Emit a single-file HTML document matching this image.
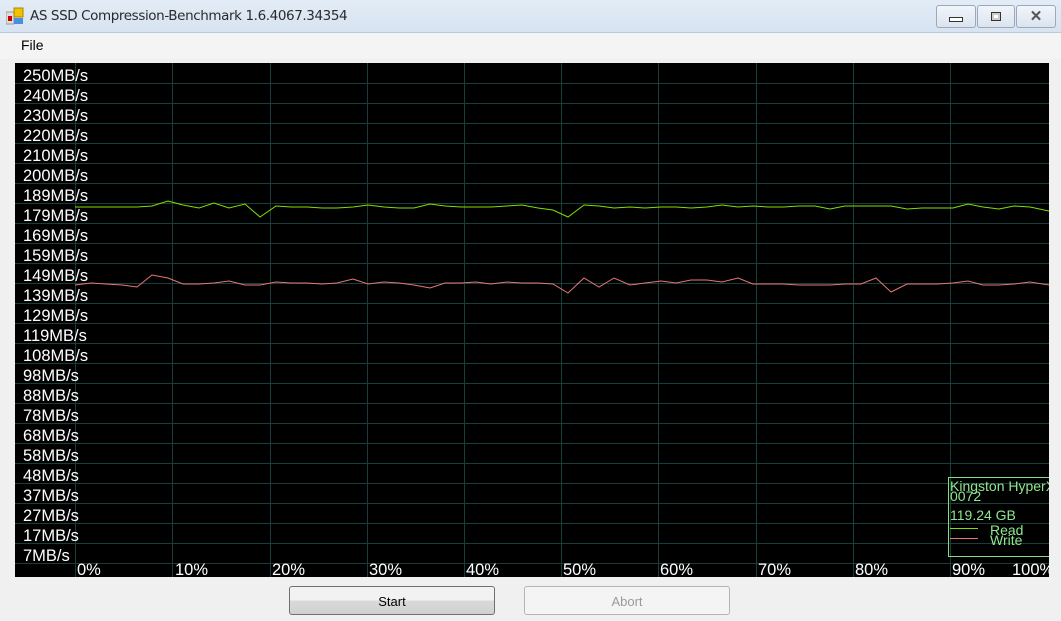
<!DOCTYPE html>
<html><head><meta charset="utf-8"><style>
body{margin:0;width:1061px;height:621px;overflow:hidden;background:#f0f0f0;font-family:"Liberation Sans",sans-serif;position:relative}
.title{position:absolute;left:0;top:0;width:1061px;height:32px;background:linear-gradient(#e3ecf6,#d7e3f1);border-bottom:1px solid #b9c9da}
.title span{position:absolute;left:30px;top:8px;font-size:13.5px;color:#2a2a2a;font-family:"DejaVu Sans",sans-serif;letter-spacing:-0.4px}
.menu{position:absolute;left:0;top:33px;width:1061px;height:26px;background:#f4f4f4}
.menu span{position:absolute;left:21px;top:4px;font-size:14px}
.wb{position:absolute;top:5px;height:21px;border:1px solid #9aa9bc;border-radius:3px;background:linear-gradient(#f1f5fa,#dbe4ee)}
.btn{position:absolute;top:586px;width:206px;height:29px;border:1px solid #707070;border-radius:3px;font-size:13px;text-align:center;line-height:29px;box-sizing:border-box}
</style></head><body>
<div class="title">
<svg style="position:absolute;left:6px;top:7px" width="18" height="18"><rect x="0" y="5" width="8" height="12" fill="#ddd" stroke="#999"/><rect x="2" y="9" width="4" height="5" fill="#c00"/><rect x="8" y="1" width="9" height="9" fill="#f2c200" stroke="#a80"/><rect x="8" y="11" width="9" height="6" fill="#4a8ee0"/></svg>
<span>AS SSD Compression-Benchmark 1.6.4067.34354</span>
<div class="wb" style="left:936px;width:38px"><div style="position:absolute;left:12px;top:11px;width:12px;height:3px;background:#fff;border:1px solid #333"></div></div>
<div class="wb" style="left:977px;width:36px"><div style="position:absolute;left:13px;top:6px;width:8px;height:7px;border:1px solid #333;background:#ccc"><div style="margin:2px;width:4px;height:3px;border:0;background:#fff"></div></div></div>
<div class="wb" style="left:1016px;width:38px;text-align:center;font-size:15px;line-height:21px;color:#555;font-weight:bold">✕</div>
</div>
<div class="menu"><span>File</span></div>
<svg style="position:absolute;left:15px;top:63px" width="1034" height="514" font-family="Liberation Sans" font-size="16.5">
<rect width="1034" height="514" fill="#000"/>
<g stroke="#173d3d" stroke-width="1">
<line x1="0" y1="20.5" x2="1034" y2="20.5"/><line x1="0" y1="40.5" x2="1034" y2="40.5"/><line x1="0" y1="60.5" x2="1034" y2="60.5"/><line x1="0" y1="80.5" x2="1034" y2="80.5"/><line x1="0" y1="100.5" x2="1034" y2="100.5"/><line x1="0" y1="120.5" x2="1034" y2="120.5"/><line x1="0" y1="140.5" x2="1034" y2="140.5"/><line x1="0" y1="160.5" x2="1034" y2="160.5"/><line x1="0" y1="180.5" x2="1034" y2="180.5"/><line x1="0" y1="200.5" x2="1034" y2="200.5"/><line x1="0" y1="220.5" x2="1034" y2="220.5"/><line x1="0" y1="240.5" x2="1034" y2="240.5"/><line x1="0" y1="260.5" x2="1034" y2="260.5"/><line x1="0" y1="280.5" x2="1034" y2="280.5"/><line x1="0" y1="300.5" x2="1034" y2="300.5"/><line x1="0" y1="320.5" x2="1034" y2="320.5"/><line x1="0" y1="340.5" x2="1034" y2="340.5"/><line x1="0" y1="360.5" x2="1034" y2="360.5"/><line x1="0" y1="380.5" x2="1034" y2="380.5"/><line x1="0" y1="400.5" x2="1034" y2="400.5"/><line x1="0" y1="420.5" x2="1034" y2="420.5"/><line x1="0" y1="440.5" x2="1034" y2="440.5"/><line x1="0" y1="460.5" x2="1034" y2="460.5"/><line x1="0" y1="480.5" x2="1034" y2="480.5"/><line x1="0" y1="500.5" x2="1034" y2="500.5"/>
<line x1="60.5" y1="0" x2="60.5" y2="514"/><line x1="157.5" y1="0" x2="157.5" y2="514"/><line x1="255.5" y1="0" x2="255.5" y2="514"/><line x1="352.5" y1="0" x2="352.5" y2="514"/><line x1="449.5" y1="0" x2="449.5" y2="514"/><line x1="546.5" y1="0" x2="546.5" y2="514"/><line x1="643.5" y1="0" x2="643.5" y2="514"/><line x1="741.5" y1="0" x2="741.5" y2="514"/><line x1="838.5" y1="0" x2="838.5" y2="514"/><line x1="935.5" y1="0" x2="935.5" y2="514"/>
</g>
<g fill="#fff">
<text x="8" y="18">250MB/s</text><text x="8" y="38">240MB/s</text><text x="8" y="58">230MB/s</text><text x="8" y="78">220MB/s</text><text x="8" y="98">210MB/s</text><text x="8" y="118">200MB/s</text><text x="8" y="138">189MB/s</text><text x="8" y="158">179MB/s</text><text x="8" y="178">169MB/s</text><text x="8" y="198">159MB/s</text><text x="8" y="218">149MB/s</text><text x="8" y="238">139MB/s</text><text x="8" y="258">129MB/s</text><text x="8" y="278">119MB/s</text><text x="8" y="298">108MB/s</text><text x="8" y="318">98MB/s</text><text x="8" y="338">88MB/s</text><text x="8" y="358">78MB/s</text><text x="8" y="378">68MB/s</text><text x="8" y="398">58MB/s</text><text x="8" y="418">48MB/s</text><text x="8" y="438">37MB/s</text><text x="8" y="458">27MB/s</text><text x="8" y="478">17MB/s</text><text x="8" y="498">7MB/s</text>
<text x="62" y="512">0%</text><text x="160" y="512">10%</text><text x="257" y="512">20%</text><text x="354" y="512">30%</text><text x="451" y="512">40%</text><text x="548" y="512">50%</text><text x="645" y="512">60%</text><text x="743" y="512">70%</text><text x="840" y="512">80%</text><text x="937" y="512">90%</text><text x="997" y="512">100%</text>
</g>
<polyline fill="none" stroke="#7fe000" stroke-width="1" points="60,144 76,144 91,144 107,144 122,144 137,143 153,138 168,142 184,145 199,140 214,145 230,141 245,154 261,143 276,144 292,144 307,145 322,145 338,144 353,142 369,144 384,145 399,145 415,141 430,143 446,144 461,144 476,144 492,143 507,142 523,145 538,147 553,154 569,142 584,143 599,145 615,144 630,145 646,144 661,144 676,145 692,144 707,142 723,144 738,143 753,144 769,144 784,143 800,143 815,146 830,143 846,143 861,143 876,143 892,146 907,145 922,145 938,145 953,141 968,144 984,146 999,143 1015,144 1034,148"/>
<polyline fill="none" stroke="#e77777" stroke-width="1" points="60,222 76,220 91,221 107,222 122,224 137,212 153,215 168,221 184,221 199,220 214,218 230,222 245,222 261,219 276,220 292,220 307,221 322,220 338,216 353,221 369,219 384,220 399,222 415,225 430,220 446,220 461,219 476,221 492,219 507,220 523,220 538,221 553,230 569,215 584,224 599,215 615,222 630,220 646,218 661,220 676,217 692,217 707,219 723,215 738,221 753,221 769,221 784,222 800,222 815,222 830,221 846,221 861,215 876,229 892,221 907,221 922,221 938,220 953,218 968,222 984,222 999,221 1015,219 1034,222"/>
<rect x="933.5" y="414.5" width="105" height="79" fill="none" stroke="#7fe07f"/>
<g fill="#8fe88f" font-size="14"><text x="935" y="428">Kingston HyperX</text><text x="935" y="438">0072</text><text x="935" y="457">119.24 GB</text><text x="975" y="472">Read</text><text x="975" y="482">Write</text></g>
<line x1="935" y1="465.5" x2="963" y2="465.5" stroke="#7fe000"/><line x1="935" y1="475.5" x2="963" y2="475.5" stroke="#e77777"/>
</svg>
<div class="btn" style="left:289px;background:linear-gradient(#f2f2f2 50%,#dadada 50%,#d0d0d0)">Start</div>
<div class="btn" style="left:524px;border-color:#b5b5b5;color:#9a9a9a;background:#f4f4f4">Abort</div>
</body></html>
